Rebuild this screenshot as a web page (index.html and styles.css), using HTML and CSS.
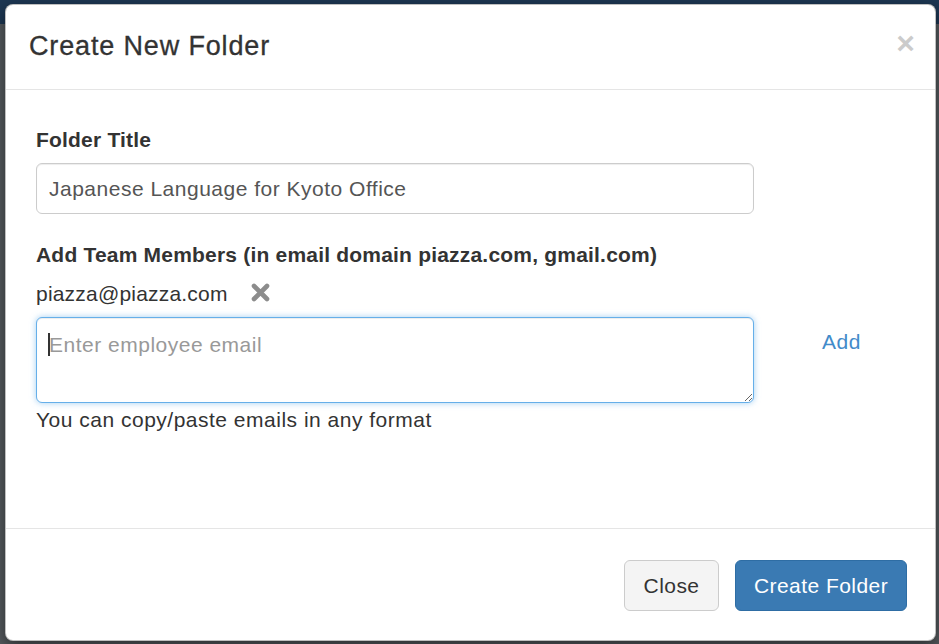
FILE: index.html
```html
<!DOCTYPE html>
<html>
<head>
<meta charset="utf-8">
<link rel="stylesheet" href="styles.css">
</head>
<body>
<div class="modal">
  <div class="modal-header">
    <h4 class="modal-title">Create New Folder</h4>
    <span class="close">&times;</span>
  </div>
  <div class="modal-body">
    <div class="form-group">
      <label class="label">Folder Title</label>
      <input class="form-control" type="text" value="Japanese Language for Kyoto Office">
    </div>
    <div class="form-group members">
      <label class="label">Add Team Members (in email domain piazza.com, gmail.com)</label>
      <div class="member">
        <span class="email">piazza@piazza.com</span>
        <svg class="remove" width="19" height="19" viewBox="0 0 19 19"><path d="M3 3 L16 16 M16 3 L3 16" stroke="#8c8c8c" stroke-width="4.6" stroke-linecap="round"/></svg>
      </div>
      <div class="add-row">
        <div class="ta-wrap">
          <textarea class="form-control ta" placeholder="Enter employee email"></textarea>
          <span class="caret"></span>
        </div>
        <a class="add">Add</a>
      </div>
      <div class="help">You can copy/paste emails in any format</div>
    </div>
  </div>
  <div class="modal-footer">
    <button class="btn btn-default">Close</button>
    <button class="btn btn-primary">Create Folder</button>
  </div>
</div>
</body>
</html>
```
FILE: styles.css
```css
html, body {
  margin: 0;
  height: 100%;
}
body {
  background: linear-gradient(to bottom, #1d3753 0, #1d3753 24px, #555a5e 24px, #555a5e 100%);
  padding: 4px 3px 3px 5px;
  box-sizing: border-box;
  font-family: "Liberation Sans", Arial, Helvetica, sans-serif;
  color: #333;
  font-size: 21px;
  line-height: 30px;
  letter-spacing: 0.5px;
}
.modal {
  width: 931px;
  height: 637px;
  box-sizing: border-box;
  background: #fff;
  border: 1px solid rgba(0,0,0,0.25);
  border-radius: 8px;
  box-shadow: 0 5px 15px rgba(0,0,0,0.5);
  display: flex;
  flex-direction: column;
  overflow: hidden;
}
.modal-header {
  height: 85px;
  box-sizing: border-box;
  border-bottom: 1.5px solid #e5e5e5;
  padding: 22px 20px 0 23px;
  display: flex;
  justify-content: space-between;
  align-items: flex-start;
}
.modal-title {
  margin: 0;
  font-size: 27px;
  line-height: 38px;
  font-weight: 500;
  letter-spacing: 0.85px;
  color: #333;
  -webkit-text-stroke: 0.3px #333;
}
.close {
  font-size: 32px;
  font-weight: bold;
  line-height: 38px;
  color: #000;
  opacity: 0.2;
  margin-top: -3px;
  letter-spacing: 0;
}
.modal-body {
  height: 438px;
  box-sizing: border-box;
  padding: 35px 30px 0 30px;
}
.label {
  display: block;
  font-weight: bold;
  margin-bottom: 8px;
  letter-spacing: 0.2px;
}
.form-group {
  margin-bottom: 26px;
}
.form-control {
  display: block;
  box-sizing: border-box;
  width: 718px;
  height: 51px;
  padding: 9px 12px;
  font-family: "Liberation Sans", Arial, Helvetica, sans-serif;
  font-size: 21px;
  line-height: 30px;
  letter-spacing: 0.5px;
  color: #555;
  background: #fff;
  border: 1.5px solid #ccc;
  border-radius: 6px;
  box-shadow: inset 0 1px 1px rgba(0,0,0,0.075);
  outline: none;
}
.members .label {
  margin-bottom: 9px;
}
.member {
  display: flex;
  align-items: center;
  gap: 23px;
  height: 30px;
  margin-bottom: 8px;
}
.email {
  letter-spacing: 0.2px;
}
.remove {
  display: block;
  margin-top: -3px;
}
.add-row {
  display: flex;
  align-items: flex-start;
  gap: 68px;
}
.ta-wrap {
  position: relative;
}
.ta {
  height: 86px;
  resize: vertical;
  padding: 12px 12px;
  border-color: #66afe9;
  box-shadow: inset 0 1px 1px rgba(0,0,0,0.075), 0 0 6px rgba(102,175,233,0.6);
}
.ta::placeholder {
  color: #999;
}
.caret {
  position: absolute;
  left: 12px;
  top: 16px;
  width: 1.5px;
  height: 23px;
  background: #333;
}
.add {
  margin-top: 10px;
  color: #428bca;
  cursor: pointer;
}
.help {
  margin-top: 2px;
  color: #333;
}
.modal-footer {
  flex: 1;
  border-top: 1.5px solid #e5e5e5;
  padding: 31px 28px 0 0;
  display: flex;
  justify-content: flex-end;
  align-items: flex-start;
  gap: 16px;
}
.btn {
  height: 51px;
  padding: 0;
  font-family: "Liberation Sans", Arial, Helvetica, sans-serif;
  font-size: 21px;
  line-height: 30px;
  letter-spacing: 0.45px;
  border-radius: 6px;
  border: 1.5px solid transparent;
}
.btn-default {
  width: 95px;
  background: #f4f4f4;
  border-color: #ccc;
  color: #333;
}
.btn-primary {
  width: 172px;
  background: #3a7ab3;
  border-color: #2e6da4;
  color: #fff;
}
```
